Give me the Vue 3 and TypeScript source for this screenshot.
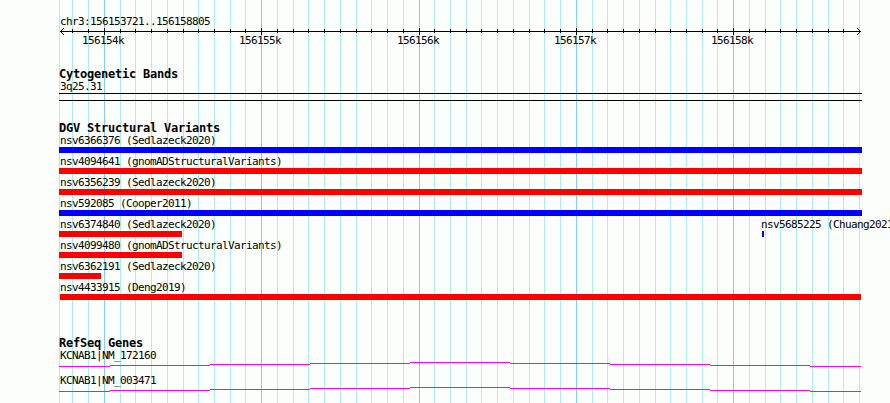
<script setup lang="ts">
interface Variant {
  name: string
  start: number
  end: number
  kind: 'gain' | 'loss'
}

const ORIGIN = 59
const majors = [104, 261, 419, 576, 733]
const minors = [
  59, 72, 88, 120, 135, 151, 167, 183, 198, 214, 230, 245, 277, 293, 308, 324, 340, 356, 371, 387,
  403, 434, 450, 466, 481, 497, 513, 529, 544, 560, 592, 607, 623, 639, 655, 670, 686, 702, 717,
  749, 765, 780, 796, 812, 828, 843, 859,
]
const minorTicks = minors.filter((x) => x > 60 && x < 859)
const tickLabels = majors.map((x, i) => ({ x: x - 22 - ORIGIN, text: `${156154 + i}k` }))

const variantRows: Variant[][] = [
  [{ name: 'nsv6366376 (Sedlazeck2020)', start: 59, end: 862, kind: 'gain' }],
  [{ name: 'nsv4094641 (gnomADStructuralVariants)', start: 59, end: 862, kind: 'loss' }],
  [{ name: 'nsv6356239 (Sedlazeck2020)', start: 59, end: 862, kind: 'loss' }],
  [{ name: 'nsv592085 (Cooper2011)', start: 59, end: 862, kind: 'gain' }],
  [
    { name: 'nsv6374840 (Sedlazeck2020)', start: 59, end: 182, kind: 'loss' },
    { name: 'nsv5685225 (Chuang2021)', start: 762, end: 764, kind: 'gain' },
  ],
  [{ name: 'nsv4099480 (gnomADStructuralVariants)', start: 59, end: 182, kind: 'loss' }],
  [{ name: 'nsv6362191 (Sedlazeck2020)', start: 59, end: 101, kind: 'loss' }],
  [{ name: 'nsv4433915 (Deng2019)', start: 60, end: 861, kind: 'loss' }],
]

const labelX = (v: Variant): number => (v.start > 100 ? v.start - 1 : 60) - ORIGIN

const genes = ['KCNAB1|NM_172160', 'KCNAB1|NM_003471']
const intronBreaks = [59, 110, 210, 310, 410, 510, 610, 710, 810, 861]
const intron = intronBreaks.slice(0, -1).map((x, i) => ({
  x: x - ORIGIN,
  width: intronBreaks[i + 1] - x,
  y: Math.abs(i - 4),
}))
</script>

<template>
  <main class="browser">
    <svg class="grid" width="890" height="403" shape-rendering="crispEdges">
      <rect v-for="x in minors" :key="x" class="grid-minor" :x="x" y="0" width="1" height="403" />
      <rect v-for="x in majors" :key="x" class="grid-major" :x="x" y="0" width="1" height="403" />
    </svg>

    <header class="region">
      <div class="label">chr3:156153721..156158805</div>
      <svg class="ruler" width="803" height="20">
        <g shape-rendering="crispEdges">
          <rect x="1" y="3" width="801" height="1" />
          <rect v-for="x in minorTicks" :key="x" :x="x - ORIGIN" y="1" width="1" height="4" />
          <rect v-for="x in majors" :key="x" :x="x - ORIGIN" y="0" width="1" height="7" />
          <template v-for="d in [1, 2, 3]" :key="d">
            <rect :x="d + 1" :y="3 - d" width="1" height="1" />
            <rect :x="d + 1" :y="3 + d" width="1" height="1" />
            <rect :x="801 - d" :y="3 - d" width="1" height="1" />
            <rect :x="801 - d" :y="3 + d" width="1" height="1" />
          </template>
        </g>
        <text v-for="t in tickLabels" :key="t.text" :x="t.x" y="16">{{ t.text }}</text>
      </svg>
    </header>

    <section class="track bands">
      <h2>Cytogenetic Bands</h2>
      <div class="label">3q25.31</div>
      <div class="band"></div>
    </section>

    <section class="track variants">
      <h2>DGV Structural Variants</h2>
      <div class="rows">
        <div v-for="(row, i) in variantRows" :key="i" class="row">
          <div
            v-for="v in row"
            :key="v.name"
            class="variant"
          >
            <span class="label" :style="{ marginLeft: labelX(v) - 1 + 'px' }">{{ v.name }}</span>
            <span
              class="bar"
              :class="v.kind"
              :style="{ marginLeft: v.start - ORIGIN + 'px', width: v.end - v.start + 'px' }"
            ></span>
          </div>
        </div>
      </div>
    </section>

    <section class="track genes">
      <h2>RefSeq Genes</h2>
      <div class="gene-list">
        <div v-for="g in genes" :key="g" class="gene">
          <div class="label">{{ g }}</div>
          <svg class="intron" width="802" height="5" shape-rendering="crispEdges">
            <rect v-for="s in intron" :key="s.x" :x="s.x" :y="s.y" :width="s.width" height="1" />
          </svg>
        </div>
      </div>
    </section>
  </main>
</template>

<style>
body {
  margin: 0;
  background: #fcfefc;
}
</style>

<style scoped>
.browser {
  position: relative;
  box-sizing: border-box;
  width: 890px;
  height: 403px;
  padding: 15px 0 0 59px;
  overflow: hidden;
  background: #fcfefc;
  color: #000;
  font-family: 'DejaVu Sans Mono', 'Liberation Mono', monospace;
  font-size: 11px;
  line-height: 13px;
  letter-spacing: -0.622px;
}
.grid {
  position: absolute;
  top: 0;
  left: 0;
}
.grid-minor {
  fill: #aceeec;
}
.grid-major {
  fill: #84ceec;
}
.region,
.track {
  position: relative;
}
.label {
  display: block;
  height: 13px;
  padding-left: 1px;
  white-space: nowrap;
}
.ruler,
.intron {
  display: block;
}
h2 {
  height: 12px;
  margin: 0;
  font-size: 12px;
  font-weight: bold;
  letter-spacing: -0.224px;
  line-height: 12px;
  white-space: nowrap;
}
.bands {
  margin-top: 20px;
}
.band {
  box-sizing: border-box;
  width: 803px;
  height: 8px;
  border-top: 1px solid #000;
  border-bottom: 1px solid #000;
}
.variants {
  margin-top: 21px;
}
.rows {
  display: grid;
  row-gap: 2px;
}
.row {
  display: grid;
}
.variant {
  grid-area: 1 / 1;
}
.bar {
  display: block;
  height: 6px;
}
.gain {
  background: #00f;
}
.loss {
  background: #f00;
}
.genes {
  margin-top: 37px;
}
.gene-list {
  display: grid;
  row-gap: 7px;
}
.intron {
  fill: #f0f;
}
</style>
